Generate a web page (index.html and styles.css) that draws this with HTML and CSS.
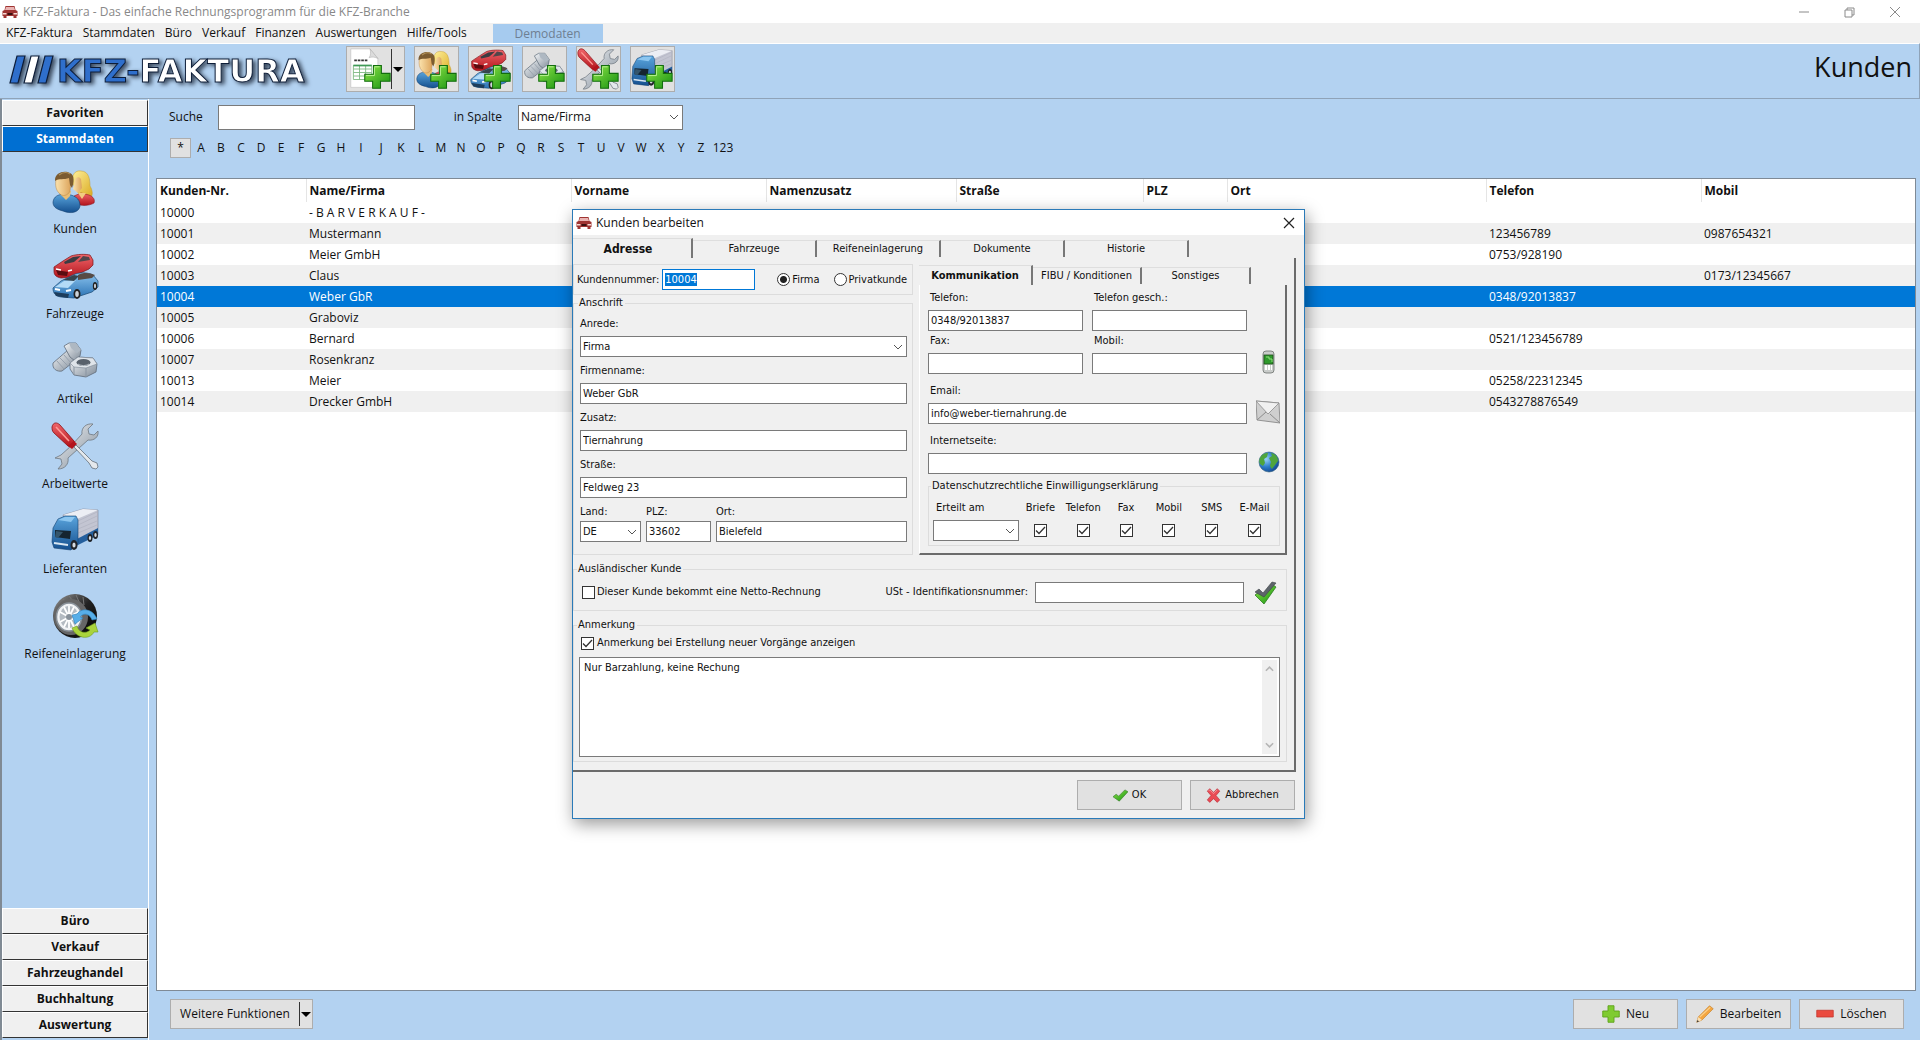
FILE: index.html
```html
<!DOCTYPE html>
<html lang="de">
<head>
    <meta charset="UTF-8">
    <meta name="viewport" content="width=device-width, initial-scale=1.0">
    <title>KFZ-Faktura</title>
    <link rel="stylesheet" href="styles.css">
</head>
<body>
    <!-- icon sprite -->
    <svg class="sprite" aria-hidden="true">
        <defs>
            <linearGradient id="gBlue" x1="0" y1="0" x2="0" y2="1"><stop offset="0" stop-color="#5aa5dd"/><stop offset="1" stop-color="#15508f"/></linearGradient>
            <linearGradient id="gCar" x1="0" y1="0" x2="0" y2="1"><stop offset="0" stop-color="#8cc4ee"/><stop offset="1" stop-color="#2a72b4"/></linearGradient>
            <linearGradient id="gRed" x1="0" y1="0" x2="0" y2="1"><stop offset="0" stop-color="#f0666a"/><stop offset="1" stop-color="#b3141c"/></linearGradient>
            <linearGradient id="gSkin" x1="0" y1="0" x2="1" y2="0"><stop offset="0" stop-color="#fbe3ae"/><stop offset="1" stop-color="#dca35a"/></linearGradient>
            <linearGradient id="gHair" x1="0" y1="0" x2="1" y2="1"><stop offset="0" stop-color="#fff09a"/><stop offset="1" stop-color="#d9a920"/></linearGradient>
            <linearGradient id="gSteel" x1="0" y1="0" x2="1" y2="1"><stop offset="0" stop-color="#f4f6f8"/><stop offset="1" stop-color="#7f8b98"/></linearGradient>
            <linearGradient id="gGreen" x1="0" y1="0" x2="1" y2="1"><stop offset="0" stop-color="#8fe548"/><stop offset="1" stop-color="#149010"/></linearGradient>
            <linearGradient id="gTyre" x1="0" y1="0" x2="1" y2="1"><stop offset="0" stop-color="#9a9a9a"/><stop offset="0.5" stop-color="#222"/><stop offset="1" stop-color="#000"/></linearGradient>
            <radialGradient id="gGlobe" cx="0.35" cy="0.35" r="0.8"><stop offset="0" stop-color="#9ad4f8"/><stop offset="0.5" stop-color="#2c7cc8"/><stop offset="1" stop-color="#0d3a80"/></radialGradient>
        </defs>
        <symbol id="i-kunden" viewBox="0 0 48 48">
            <path d="M22 17C20 8 24 3 30 4c8 0 9 9 9 15 3 5 3 10 0 12l-10-2z" fill="url(#gHair)" stroke="#c39a2c" stroke-width=".5"/>
            <path d="M24 13c1-3 4-4 6-1l1 9-4 5-5-4z" fill="url(#gSkin)"/>
            <path d="M23 29l7-3 8 2c5 2 6 5 5 8-5 3-13 3-17 1z" fill="url(#gRed)" stroke="#8d1a20" stroke-width=".6"/>
            <path d="M27 26l4 6 4-6z" fill="#f1cb80"/>
            <path d="M2 35c1-6 5-7 10-8l8 1c6 2 9 5 9 11-1 7-10 8-17 5C4 42 2 39 2 35z" fill="url(#gBlue)" stroke="#123f70" stroke-width=".6"/>
            <path d="M10 24h10l-1 5-4 4-5-5z" fill="#e9bd74"/>
            <path d="M5 13c1-7 15-7 15 1l-1 10c-2 5-8 6-11 2-3-3-4-8-3-13z" fill="url(#gSkin)" stroke="#b98443" stroke-width=".5"/>
            <path d="M4 13C4 5 14 3 19 6c5 2 4 10 2 15l-2-3-1-7C13 13 8 11 4 14z" fill="#7b5b31"/>
            <path d="M8 8c4-3 8-3 11-1" fill="none" stroke="#b2925a" stroke-width="1.2"/>
        </symbol>
        <symbol id="i-fahrzeuge" viewBox="0 0 48 48">
            <path d="M3 15l9-6 8-5c6-2 15-2 19-1l3 5v5l-4 4-17 8-11 1c-5-1-7-3-7-7z" fill="url(#gRed)" stroke="#7c1116" stroke-width=".7"/>
            <path d="M13 10l9-5 8-1-7 6-9 2z" fill="#3c3c42"/>
            <path d="M32 4l6 1 1 3-12 2z" fill="#52464a"/>
            <path d="M5 18l12 2-1 4-9-1z" fill="#5a0c10"/>
            <path d="M5 17l5 1M17 19l4-1" stroke="#fff" stroke-width="1.5"/>
            <path d="M2 36l8-7 12-6c6-3 14-3 20 0l5 6v6l-6 5-18 6-13-1c-6-1-8-4-8-9z" fill="url(#gCar)" stroke="#194872" stroke-width=".7"/>
            <path d="M4 35l9-6 12-1-8 8z" fill="#b4dbf7"/>
            <path d="M14 27l9-4 5 1-5 5-11-1z" fill="#36454f"/>
            <path d="M27 23c6-3 12-2 17 0l-3 3-14 2z" fill="#574b45"/>
            <path d="M3 40l15 2-1 4-12-2z" fill="#1d3d5c"/>
            <path d="M4 37l5 1M15 39l5-1" stroke="#fff" stroke-width="2"/>
            <ellipse cx="26" cy="42" rx="3.5" ry="5" fill="#222"/><ellipse cx="26" cy="42" rx="1.8" ry="3" fill="#ccd3da"/>
            <ellipse cx="44" cy="34" rx="2.2" ry="4" fill="#222"/><ellipse cx="44" cy="34" rx="1" ry="2.2" fill="#ccd3da"/>
        </symbol>
        <symbol id="i-artikel" viewBox="0 0 48 48">
            <path d="M2 26L17 13l8 10-14 11c-5 1-10-2-9-8z" fill="url(#gSteel)" stroke="#5f6b78" stroke-width=".8"/>
            <path d="M6 24l7 8M9 21l8 8M13 18l7 8" stroke="#97a1ad" stroke-width="1"/>
            <path d="M13 9l5-3 7 0 5 7-1 6-5 5-5-4z" fill="url(#gSteel)" stroke="#5f6b78" stroke-width=".8"/>
            <path d="M18 6l7 0 5 7-4 3-6-5z" fill="#aeb8c2"/>
            <path d="M19 26l8-6 15 1 4 6-1 8-10 5-12-2-4-6z" fill="url(#gSteel)" stroke="#5f6b78" stroke-width=".8"/>
            <path d="M19 26l8-6 15 1 4 6-11 4-12-1z" fill="#dfe4e9" stroke="#7b8794" stroke-width=".6"/>
            <path d="M23 30v8M35 31v9" stroke="#8a95a1" stroke-width="1"/>
            <ellipse cx="32.500" cy="25.500" rx="7" ry="3.500" fill="#59626c"/>
            <path d="M27 27c3 2 8 2 11 0" stroke="#b9c1c9" fill="none"/>
        </symbol>
        <symbol id="i-arbeitswerte" viewBox="0 0 48 48">
            <path d="M4 36l6-3 10-9 11-12c-1-6 4-11 11-10l-5 5 1 5 5 1 4-4c1 6-4 10-10 9L17 36c1 6-3 11-10 11l4-5-1-5-6-1z" fill="url(#gSteel)" stroke="#6f7780" stroke-width=".8"/>
            <path d="M1 5C2 0 6 0 9 3l14 16c2 3-2 7-6 5L3 11C1 9 1 7 1 5z" fill="url(#gRed)" stroke="#8c1014" stroke-width=".8"/>
            <path d="M5 5l13 14" stroke="#ff9a94" stroke-width="1.6"/>
            <path d="M17 24l6-5 3 3-5 5z" fill="#b3141c"/>
            <path d="M23 25l2-2 16 16 5 2 1 4-2 2-4-1-3-5z" fill="#e4e8ec" stroke="#66707a" stroke-width=".8"/>
        </symbol>
        <symbol id="i-lieferanten" viewBox="0 0 48 48">
            <path d="M12 8L32 2l15 1v25l-22 9z" fill="#c3c5d2" stroke="#7d8090" stroke-width=".6"/>
            <path d="M12 8L32 2l15 1-21 9z" fill="#eceef4"/>
            <path d="M27 14l19-9M27 18l19-9M27 22l19-8M27 26l19-8" stroke="#b3b5c3" stroke-width=".8"/>
            <path d="M24 33l23-12v7L25 39z" fill="#245f9d"/>
            <path d="M2 21l5-9 7-3h11l2 4v23l-7 7-17-2-2-6z" fill="url(#gBlue)" stroke="#123f70" stroke-width=".6"/>
            <path d="M4 23l16 1-1 8-15-2z" fill="#152430"/>
            <path d="M5 24l7 1-5 6-3-1z" fill="#35556b"/>
            <path d="M7 13l7-3h10l-4 5z" fill="#8cc6f0"/>
            <path d="M3 36l14 2" stroke="#d8e6f2" stroke-width="2"/>
            <ellipse cx="23" cy="38" rx="3.500" ry="5" fill="#20242a"/><ellipse cx="23" cy="38" rx="1.600" ry="2.600" fill="#d3d9df"/>
            <ellipse cx="39" cy="31" rx="2.500" ry="4" fill="#20242a"/><ellipse cx="39" cy="31" rx="1.200" ry="2" fill="#d3d9df"/>
            <ellipse cx="44.500" cy="28" rx="2.500" ry="4" fill="#20242a"/><ellipse cx="44.500" cy="28" rx="1.200" ry="2" fill="#d3d9df"/>
        </symbol>
        <symbol id="i-reifen" viewBox="0 0 48 48">
            <circle cx="24" cy="24" r="22" fill="url(#gTyre)"/>
            <path d="M12 7l9 8M18 4l7 9M25 3l4 9M32 5l1 8" stroke="#777" stroke-width="1"/>
            <ellipse cx="20" cy="25" rx="17" ry="18" fill="#666"/>
            <ellipse cx="18" cy="25" rx="12.500" ry="14" fill="#f1f3f5" stroke="#8a929a" stroke-width="1.500"/>
            <ellipse cx="18" cy="25" rx="9.500" ry="11" fill="#b4bbc2"/>
            <path d="M18 14v22M9 20l18 10M9 30l18-10M13 15l10 20M23 15L13 35" stroke="#fff" stroke-width="1.800"/>
            <circle cx="18" cy="25" r="3" fill="#88919a"/>
            <path d="M46 27C42 17 31 15 26 22l-5 1 3 9 8-6-3-1c4-5 10-3 12 3z" fill="#57aee8" stroke="#2f7fb9" stroke-width=".6"/>
            <path d="M21 36c4 10 17 13 22 4l4 0-3-9-9 5 4 2c-4 4-11 3-13-4z" fill="#a9d33c" stroke="#6d9a1c" stroke-width=".6"/>
        </symbol>
        <symbol id="i-rechnung" viewBox="0 0 48 48">
            <path d="M2 1h22l9 11v33H2z" fill="#fff" stroke="#c4c4c4" stroke-width=".8"/>
            <path d="M24 1l9 11c-4-2-7-2-10-1 2-3 2-6 1-10z" fill="#dcdcdc" stroke="#aaa" stroke-width=".6"/>
            <path d="M6 14h16" stroke="#333" stroke-width="2" stroke-dasharray="3 1"/>
            <path d="M5 20h21v16H5zM5 24h21M5 28h21M5 32h21M12 20v16M19 20v16" fill="none" stroke="#7ab77f" stroke-width="1"/>
            <path d="M5 20h21" stroke="#3f9a56" stroke-width="2"/>
        </symbol>
        <symbol id="i-badge" viewBox="0 0 48 48">
            <path d="M28 20h9v9h10v9H36v8h-9v-8H18v-8h10z" fill="url(#gGreen)" stroke="#126d0e" stroke-width="1.200"/>
            <path d="M29 21.500h6M19.500 31.500h9.500v-9.500" fill="none" stroke="#c5f7a0" stroke-width="1"/>
        </symbol>
        <symbol id="i-auto" viewBox="0 0 16 16">
            <path d="M3.500 2h9l1 4 2 1v5h-1v2h-3v-2h-7v2h-3v-2h-1V7l2-1z" fill="#9f3432"/>
            <path d="M4 3h8l1 3H3z" fill="#e9b4b3"/>
            <path d="M1 9h3.500v1.500H1zM11.500 9H15v1.500h-3.500z" fill="#f7d9d4"/>
            <path d="M5.500 9h5v2h-5z" fill="#3b1010"/>
        </symbol>
        <symbol id="i-handy" viewBox="0 0 24 24">
            <rect x="7" y="1" width="11" height="22" rx="3" fill="#c9ccca" stroke="#6b706c" stroke-width=".8"/>
            <rect x="8" y="5" width="9" height="9" fill="#2f9a2c" stroke="#1c4c1a" stroke-width=".8"/>
            <path d="M10 7h3v2h3v3" stroke="#8fe07c" fill="none"/>
            <path d="M9 15h2v5H9zM12 15h2v5h-2zM15 15h1v5h-1z" fill="#fff"/>
        </symbol>
        <symbol id="i-brief" viewBox="0 0 24 24">
            <path d="M0 1l23 2 1 20L1 20z" fill="#cfcfcf" stroke="#808080" stroke-width=".8"/>
            <path d="M1 20l9-8M24 23l-10-9" stroke="#8c8c8c" stroke-width="1"/>
            <path d="M0 1l12 13L23 3z" fill="#f0f0f0" stroke="#8c8c8c" stroke-width=".8"/>
        </symbol>
        <symbol id="i-globus" viewBox="0 0 24 24">
            <circle cx="13" cy="12" r="10" fill="url(#gGlobe)" stroke="#2c5c7d" stroke-width=".6"/>
            <path d="M4 8c2-4 5-5 8-5l-1 4-3 2 1 4-2 3-3-2c-1-2-1-4 0-6zM15 3c5 1 7 4 7 8l-3 4-3 4-2-3 1-4-2-4 3-2z" fill="#4fa53c"/>
        </symbol>
        <symbol id="i-haken" viewBox="0 0 24 24">
            <path d="M0 14l5-4 4 3L19 3l5 3L10 21z" fill="url(#gGreen)" stroke="#3c7d32" stroke-width="1"/>
        </symbol>
        <symbol id="i-haken-dunkel" viewBox="0 0 24 24">
            <path d="M1 15l4-3 4 4L19 5l3 2-12 17z" fill="url(#gGreen)" stroke="#2c7d22" stroke-width=".8"/>
            <path d="M1 12l4-3 4 4L18 2l4 1-12 14z" fill="#5d646a" stroke="#3c4247" stroke-width=".6"/>
        </symbol>
        <symbol id="i-kreuz" viewBox="0 0 24 24">
            <path d="M2 5l4-4 6 6 6-6 4 4-6 7 6 7-4 4-6-6-6 6-4-4 6-7z" fill="#ea4b55" stroke="#b32e38" stroke-width="1"/>
            <path d="M4 5l2-2 6 6 6-6" fill="none" stroke="#f7a3a8" stroke-width="1.200"/>
        </symbol>
        <symbol id="i-plus" viewBox="0 0 24 24">
            <path d="M8 1h8v7h7v8h-7v7H8v-7H1V8h7z" fill="#7fcb31" stroke="#5da31c" stroke-width="1.200"/>
        </symbol>
        <symbol id="i-stift" viewBox="0 0 24 24">
            <path d="M1 23l2-7L18 1l5 4L8 20z" fill="#f4a53f" stroke="#c07a22" stroke-width=".8"/>
            <path d="M1 23l2-7 5 4z" fill="#f7dfb5"/><path d="M1 23l1-3 2 2z" fill="#333"/>
            <path d="M5 16L19 3" stroke="#fbd08a" stroke-width="1.500"/>
        </symbol>
        <symbol id="i-minus" viewBox="0 0 24 24">
            <path d="M1 7h22v9H1z" fill="#ea4b3f" stroke="#c23128" stroke-width="1"/>
        </symbol>
    </svg>

    <header class="titlebar">
        <svg class="icon-16"><use href="#i-auto"/></svg>
        <span class="titlebar-text">KFZ-Faktura - Das einfache Rechnungsprogramm für die KFZ-Branche</span>
        <svg class="window-controls" viewBox="0 0 108 16" aria-hidden="true">
            <path d="M3 8h10M49 6h7v7h-7zM51 6V4h7v7h-2M94 3l10 10M104 3L94 13" fill="none" stroke="#8a8a8a"/>
        </svg>
    </header>

    <nav class="menubar">
        <button type="button">KFZ-Faktura</button>
        <button type="button">Stammdaten</button>
        <button type="button">Büro</button>
        <button type="button">Verkauf</button>
        <button type="button">Finanzen</button>
        <button type="button">Auswertungen</button>
        <button type="button">Hilfe/Tools</button>
        <span class="demo">Demodaten</span>
    </nav>

    <div class="toolbar">
        <svg class="logo" viewBox="0 0 330 50" role="img" aria-label="KFZ-Faktura">
            <g stroke="#0d1d38" stroke-width="1.200">
                <path d="M17 12h8l-7 27h-8z" fill="#2f6fcc"/>
                <path d="M31 12h8l-7 27h-8z" fill="#fff"/>
                <path d="M45 12h8l-7 27h-8z" fill="#2f6fcc"/>
            </g>
            <text class="logo-text" x="57" y="38"><tspan class="logo-blue">KFZ-</tspan><tspan class="logo-white">FAKTURA</tspan></text>
        </svg>
        <div class="tools">
            <div class="split-tool">
                <button type="button" class="split-main" aria-label="Neue Rechnung"><svg viewBox="0 0 48 48"><use href="#i-rechnung"/><use href="#i-badge"/></svg></button>
                <button type="button" class="split-arrow" aria-label="Auswahl"><i class="arrow"></i></button>
            </div>
            <button type="button" class="tool" aria-label="Neuer Kunde"><svg viewBox="0 0 48 48"><use href="#i-kunden"/><use href="#i-badge"/></svg></button>
            <button type="button" class="tool" aria-label="Neues Fahrzeug"><svg viewBox="0 0 48 48"><use href="#i-fahrzeuge"/><use href="#i-badge"/></svg></button>
            <button type="button" class="tool" aria-label="Neuer Artikel"><svg viewBox="0 0 48 48"><use href="#i-artikel"/><use href="#i-badge"/></svg></button>
            <button type="button" class="tool" aria-label="Neuer Arbeitswert"><svg viewBox="0 0 48 48"><use href="#i-arbeitswerte"/><use href="#i-badge"/></svg></button>
            <button type="button" class="tool" aria-label="Neuer Lieferant"><svg viewBox="0 0 48 48"><use href="#i-lieferanten"/><use href="#i-badge"/></svg></button>
        </div>
        <h1>Kunden</h1>
    </div>

    <div class="workspace">
        <aside class="sidebar">
            <button type="button" class="side-head">Favoriten</button>
            <button type="button" class="side-head active">Stammdaten</button>
            <div class="side-items">
                <button type="button" class="side-item"><svg><use href="#i-kunden"/></svg>Kunden</button>
                <button type="button" class="side-item"><svg><use href="#i-fahrzeuge"/></svg>Fahrzeuge</button>
                <button type="button" class="side-item"><svg><use href="#i-artikel"/></svg>Artikel</button>
                <button type="button" class="side-item"><svg><use href="#i-arbeitswerte"/></svg>Arbeitwerte</button>
                <button type="button" class="side-item"><svg><use href="#i-lieferanten"/></svg>Lieferanten</button>
                <button type="button" class="side-item"><svg><use href="#i-reifen"/></svg>Reifeneinlagerung</button>
            </div>
            <button type="button" class="side-head">Büro</button>
            <button type="button" class="side-head">Verkauf</button>
            <button type="button" class="side-head">Fahrzeughandel</button>
            <button type="button" class="side-head">Buchhaltung</button>
            <button type="button" class="side-head">Auswertung</button>
        </aside>

        <main class="content">
            <div class="search">
                <label for="suche">Suche</label>
                <input type="text" id="suche">
                <label for="spalte" class="spalte-label">in Spalte</label>
                <select id="spalte"><option>Name/Firma</option></select>
            </div>
            <div class="letters">
                <button type="button" class="current">*</button>
                <button type="button">A</button><button type="button">B</button><button type="button">C</button><button type="button">D</button><button type="button">E</button><button type="button">F</button><button type="button">G</button><button type="button">H</button><button type="button">I</button><button type="button">J</button><button type="button">K</button><button type="button">L</button><button type="button">M</button><button type="button">N</button><button type="button">O</button><button type="button">P</button><button type="button">Q</button><button type="button">R</button><button type="button">S</button><button type="button">T</button><button type="button">U</button><button type="button">V</button><button type="button">W</button><button type="button">X</button><button type="button">Y</button><button type="button">Z</button><button type="button">123</button>
            </div>

            <div class="grid-panel">
                <table class="grid">
                    <colgroup>
                        <col class="c-nr"><col class="c-name"><col class="c-vorname"><col class="c-zusatz"><col class="c-strasse"><col class="c-plz"><col class="c-ort"><col class="c-telefon"><col>
                    </colgroup>
                    <thead>
                        <tr><th>Kunden-Nr.</th><th>Name/Firma</th><th>Vorname</th><th>Namenzusatz</th><th>Straße</th><th>PLZ</th><th>Ort</th><th>Telefon</th><th>Mobil</th></tr>
                    </thead>
                    <tbody>
                        <tr><td>10000</td><td>- B A R V E R K A U F -</td><td></td><td></td><td></td><td></td><td></td><td></td><td></td></tr>
                        <tr><td>10001</td><td>Mustermann</td><td></td><td></td><td></td><td></td><td></td><td>123456789</td><td>0987654321</td></tr>
                        <tr><td>10002</td><td>Meier GmbH</td><td></td><td></td><td></td><td></td><td></td><td>0753/928190</td><td></td></tr>
                        <tr><td>10003</td><td>Claus</td><td></td><td></td><td></td><td></td><td></td><td></td><td>0173/12345667</td></tr>
                        <tr class="selected"><td>10004</td><td>Weber GbR</td><td></td><td></td><td></td><td></td><td></td><td>0348/92013837</td><td></td></tr>
                        <tr><td>10005</td><td>Graboviz</td><td></td><td></td><td></td><td></td><td></td><td></td><td></td></tr>
                        <tr><td>10006</td><td>Bernard</td><td></td><td></td><td></td><td></td><td></td><td>0521/123456789</td><td></td></tr>
                        <tr><td>10007</td><td>Rosenkranz</td><td></td><td></td><td></td><td></td><td></td><td></td><td></td></tr>
                        <tr><td>10013</td><td>Meier</td><td></td><td></td><td></td><td></td><td></td><td>05258/22312345</td><td></td></tr>
                        <tr><td>10014</td><td>Drecker GmbH</td><td></td><td></td><td></td><td></td><td></td><td>0543278876549</td><td></td></tr>
                    </tbody>
                </table>
            </div>

            <div class="actions">
                <div class="split-button">
                    <button type="button" class="split-label">Weitere Funktionen</button>
                    <button type="button" class="split-arrow" aria-label="Auswahl"><i class="arrow"></i></button>
                </div>
                <button type="button" class="btn first"><svg><use href="#i-plus"/></svg>Neu</button>
                <button type="button" class="btn"><svg><use href="#i-stift"/></svg>Bearbeiten</button>
                <button type="button" class="btn"><svg><use href="#i-minus"/></svg>Löschen</button>
            </div>
        </main>
    </div>

    <form class="dialog" role="dialog" aria-labelledby="dlgTitle" onsubmit="return false">
        <div class="dialog-title">
            <svg class="icon-16"><use href="#i-auto"/></svg>
            <span id="dlgTitle">Kunden bearbeiten</span>
            <button type="button" class="close" aria-label="Schließen"><svg viewBox="0 0 12 12"><path d="M1 1l10 10M11 1L1 11" stroke="#222" stroke-width="1.200"/></svg></button>
        </div>

        <div class="tabs main-tabs">
            <button type="button" class="tab active">Adresse</button>
            <button type="button" class="tab">Fahrzeuge</button>
            <button type="button" class="tab">Reifeneinlagerung</button>
            <button type="button" class="tab">Dokumente</button>
            <button type="button" class="tab">Historie</button>
        </div>

        <div class="page">
            <div class="columns">
                <div class="address">
                    <fieldset class="number-row">
                        <label for="kundennr">Kundennummer:</label>
                        <input type="text" id="kundennr" value="10004">
                        <input type="radio" name="art" id="artFirma" checked><label for="artFirma">Firma</label>
                        <input type="radio" name="art" id="artPrivat"><label for="artPrivat">Privatkunde</label>
                    </fieldset>

                    <fieldset class="anschrift">
                        <legend>Anschrift</legend>
                        <div class="field">
                            <label for="anrede">Anrede:</label>
                            <select id="anrede"><option>Firma</option></select>
                        </div>
                        <div class="field">
                            <label for="firmenname">Firmenname:</label>
                            <input type="text" id="firmenname" value="Weber GbR">
                        </div>
                        <div class="field">
                            <label for="zusatz">Zusatz:</label>
                            <input type="text" id="zusatz" value="Tiernahrung">
                        </div>
                        <div class="field">
                            <label for="strasse">Straße:</label>
                            <input type="text" id="strasse" value="Feldweg 23">
                        </div>
                        <div class="place">
                            <div class="field tight">
                                <label for="land">Land:</label>
                                <select id="land"><option>DE</option></select>
                            </div>
                            <div class="field tight">
                                <label for="plz">PLZ:</label>
                                <input type="text" id="plz" value="33602">
                            </div>
                            <div class="field tight">
                                <label for="ort">Ort:</label>
                                <input type="text" id="ort" value="Bielefeld">
                            </div>
                        </div>
                    </fieldset>
                </div>

                <div class="contact">
                    <div class="tabs sub-tabs">
                        <button type="button" class="tab active">Kommunikation</button>
                        <button type="button" class="tab">FIBU / Konditionen</button>
                        <button type="button" class="tab">Sonstiges</button>
                    </div>
                    <div class="contact-page">
                        <div class="contact-grid">
                            <div class="field">
                                <label for="telefon">Telefon:</label>
                                <input type="text" id="telefon" value="0348/92013837">
                            </div>
                            <div class="field">
                                <label for="telefonG">Telefon gesch.:</label>
                                <input type="text" id="telefonG">
                            </div>
                            <span></span>
                            <div class="field">
                                <label for="fax">Fax:</label>
                                <input type="text" id="fax">
                            </div>
                            <div class="field">
                                <label for="mobil">Mobil:</label>
                                <input type="text" id="mobil">
                            </div>
                            <svg class="icon-24"><use href="#i-handy"/></svg>
                            <div class="field wide">
                                <label for="email">Email:</label>
                                <input type="text" id="email" value="info@weber-tiernahrung.de">
                            </div>
                            <svg class="icon-24"><use href="#i-brief"/></svg>
                            <div class="field wide">
                                <label for="web">Internetseite:</label>
                                <input type="text" id="web">
                            </div>
                            <svg class="icon-24"><use href="#i-globus"/></svg>
                        </div>

                        <fieldset class="consent">
                            <legend>Datenschutzrechtliche Einwilligungserklärung</legend>
                            <div class="consent-grid">
                                <div class="consent-date">
                                    <label for="erteilt">Erteilt am</label>
                                    <select id="erteilt"><option></option></select>
                                </div>
                                <label>Briefe<input type="checkbox" checked></label>
                                <label>Telefon<input type="checkbox" checked></label>
                                <label>Fax<input type="checkbox" checked></label>
                                <label>Mobil<input type="checkbox" checked></label>
                                <label>SMS<input type="checkbox" checked></label>
                                <label>E-Mail<input type="checkbox" checked></label>
                            </div>
                        </fieldset>
                    </div>
                </div>
            </div>

            <fieldset class="foreign">
                <legend>Ausländischer Kunde</legend>
                <div class="foreign-row">
                    <input type="checkbox" id="netto"><label for="netto">Dieser Kunde bekommt eine Netto-Rechnung</label>
                    <label for="ust" class="ust-label">USt - Identifikationsnummer:</label>
                    <input type="text" id="ust">
                    <svg class="icon-24"><use href="#i-haken-dunkel"/></svg>
                </div>
            </fieldset>

            <fieldset class="note">
                <legend>Anmerkung</legend>
                <div class="note-check">
                    <input type="checkbox" id="anzeigen" checked><label for="anzeigen">Anmerkung bei Erstellung neuer Vorgänge anzeigen</label>
                </div>
                <div class="note-box">
                    <textarea aria-label="Anmerkung">Nur Barzahlung, keine Rechung</textarea>
                    <div class="scroll">
                        <svg viewBox="0 0 10 7"><path d="M1 6l4-4 4 4" fill="none" stroke="#b5b5b5" stroke-width="1.800"/></svg>
                        <svg viewBox="0 0 10 7"><path d="M1 1l4 4 4-4" fill="none" stroke="#b5b5b5" stroke-width="1.800"/></svg>
                    </div>
                </div>
            </fieldset>
        </div>

        <div class="dialog-buttons">
            <button type="submit" class="btn"><svg><use href="#i-haken"/></svg>OK</button>
            <button type="button" class="btn"><svg><use href="#i-kreuz"/></svg>Abbrechen</button>
        </div>
    </form>

    <script>
        window.onload = function () {
            const nr = document.getElementById('kundennr');
            nr.focus();
            nr.select();
        };
    </script>
</body>
</html>
```
FILE: styles.css
```css
* {
    box-sizing: border-box;
}

body {
    margin: 0;
    min-height: 100vh;
    display: flex;
    flex-direction: column;
    background-color: #b3d2f1;
    color: #111;
    font-family: "Open Sans", "Noto Sans", sans-serif;
    font-size: 12px;
    line-height: 16px;
}

button, input, select, textarea {
    font: inherit;
    color: inherit;
    margin: 0;
    border-radius: 0;
}

button {
    background: none;
    border: none;
    padding: 0;
    cursor: pointer;
}

.sprite {
    position: absolute;
    width: 0;
    height: 0;
}

.icon-16 {
    width: 16px;
    height: 16px;
}

.icon-24 {
    width: 24px;
    height: 24px;
}

.arrow {
    border: 5px solid transparent;
    border-top-color: #000;
    border-bottom-width: 0;
}

/* title and menu */
.titlebar {
    display: flex;
    align-items: center;
    height: 23px;
    padding-left: 2px;
    background-color: #fff;
    color: #888;
}

.titlebar-text {
    margin-left: 5px;
}

.window-controls {
    width: 108px;
    height: 16px;
    margin-left: auto;
    margin-right: 16px;
}

.menubar {
    display: flex;
    align-items: center;
    gap: 10px;
    height: 20px;
    padding-left: 6px;
    background-color: #f0f0f0;
}

.demo {
    width: 110px;
    margin-left: 16px;
    line-height: 19px;
    text-align: center;
    background-color: #a6cbef;
    color: #6e7f92;
}

/* toolbar */
.toolbar {
    display: flex;
    height: 56px;
    padding-right: 7px;
    border: 1px solid #8fa3b8;
    border-top-color: #fff;
    border-left: none;
}

.logo {
    width: 330px;
    height: 50px;
    margin-right: 16px;
    filter: drop-shadow(3px 2px 2px #3d4c60);
}

.logo-text {
    font-family: "DejaVu Sans", sans-serif;
    font-size: 32px;
    font-weight: bold;
    stroke: #0d1d38;
    stroke-width: 1px;
}

.logo-blue {
    fill: #2f6fcc;
}

.logo-white {
    fill: #fff;
}

.tools {
    display: flex;
    gap: 9px;
    padding-top: 2px;
}

.tool, .split-tool {
    height: 46px;
    background-color: #e1e1e1;
    border: 1px solid #adadad;
}

.tool {
    width: 45px;
}

.tool svg, .split-main svg {
    display: block;
    width: 42px;
    height: 42px;
}

.split-tool {
    display: flex;
    width: 59px;
}

.split-main {
    padding-left: 2px;
}

.split-arrow {
    display: flex;
    align-items: center;
    justify-content: center;
    width: 13px;
    margin: 2px 0;
    border-left: 1px solid #333;
}

.toolbar h1 {
    margin: 0 0 0 auto;
    font-size: 27px;
    font-weight: normal;
    line-height: 46px;
}

/* sidebar */
.workspace {
    flex: 1;
    display: flex;
}

.sidebar {
    display: flex;
    flex-direction: column;
    width: 149px;
    padding: 1px 0 2px;
    border-left: 2px solid #808a94;
    border-right: 1px solid #fff;
}

.side-head {
    height: 26px;
    background-color: #f0f0f0;
    border: 1px solid #333;
    border-top-color: #fff;
    border-left-color: #fff;
    font-weight: bold;
}

.side-head.active {
    background-color: #006fd2;
    color: #fff;
}

.side-items {
    flex: 1;
    display: flex;
    flex-direction: column;
    padding-top: 15px;
}

.side-item {
    display: flex;
    flex-direction: column;
    align-items: center;
    gap: 6px;
    height: 85px;
}

.side-item svg {
    width: 48px;
    height: 48px;
}

/* customer list */
.content {
    flex: 1;
    display: flex;
    flex-direction: column;
    padding: 5px 4px 11px 7px;
}

.search {
    display: flex;
    align-items: center;
    height: 26px;
    padding-left: 13px;
}

.search input {
    width: 197px;
    height: 25px;
    margin-left: 15px;
}

.spalte-label {
    margin-left: 39px;
}

.search select {
    width: 165px;
    height: 25px;
    margin-left: 16px;
}

input[type="text"], select {
    min-width: 0;
    padding: 0 2px;
    border: 1px solid #7a7a7a;
    background-color: #fff;
    outline: none;
}

select {
    appearance: none;
    background-image: url("data:image/svg+xml,%3Csvg xmlns='http://www.w3.org/2000/svg' viewBox='0 0 10 6'%3E%3Cpath d='M1 1l4 4 4-4' fill='none' stroke='%23555'/%3E%3C/svg%3E");
    background-repeat: no-repeat;
    background-position: right 3px center;
    background-size: 10px 6px;
}

.letters {
    display: flex;
    margin: 8px 0 20px 14px;
}

.letters button {
    width: 20px;
    height: 20px;
    line-height: 20px;
}

.letters .current {
    width: 21px;
    background-color: #e1e1e1;
    border: 1px solid #adadad;
    line-height: 18px;
}

.letters button:last-child {
    width: 24px;
}

.grid-panel {
    flex: 1;
    background-color: #fff;
    border: 1px solid #7f8a96;
}

.grid {
    width: 100%;
    table-layout: fixed;
    border-collapse: collapse;
}

.grid th, .grid td {
    height: 21px;
    padding: 0 3px;
    text-align: left;
    white-space: nowrap;
}

.grid th {
    height: 23px;
    border-left: 1px solid #e5e5e5;
}

.grid th:first-child {
    border-left: none;
}

.grid tbody tr:nth-child(even) {
    background-color: #f0f0f0;
}

.grid tbody tr.selected {
    background-color: #0078d7;
    color: #fff;
}

.c-nr { width: 149px; }
.c-name { width: 265px; }
.c-vorname { width: 195px; }
.c-zusatz { width: 190px; }
.c-strasse { width: 187px; }
.c-plz { width: 84px; }
.c-ort { width: 259px; }
.c-telefon { width: 215px; }

.actions {
    display: flex;
    gap: 8px;
    padding: 8px 12px 0 14px;
}

.split-button {
    display: flex;
    width: 143px;
    height: 30px;
    background-color: #e1e1e1;
    border: 1px solid #adadad;
}

.split-label {
    flex: 1;
}

.btn {
    display: flex;
    align-items: center;
    justify-content: center;
    gap: 6px;
    width: 105px;
    height: 30px;
    background-color: #e1e1e1;
    border: 1px solid #adadad;
}

.btn.first {
    margin-left: auto;
}

.btn svg {
    width: 18px;
    height: 18px;
}

/* customer dialog */
.dialog {
    position: absolute;
    left: 572px;
    top: 209px;
    width: 733px;
    background-color: #f0f0f0;
    border: 1px solid #2a7ab8;
    box-shadow: 2px 5px 16px rgba(0, 0, 0, 0.4);
    font-family: "DejaVu Sans Condensed", "DejaVu Sans", sans-serif;
    font-size: 11px;
}

.dialog-title {
    display: flex;
    align-items: center;
    gap: 4px;
    height: 25px;
    padding: 0 9px 0 3px;
    background-color: #fff;
    font-family: "Open Sans", "Noto Sans", sans-serif;
    font-size: 12px;
}

.close {
    display: flex;
    margin-left: auto;
}

.close svg {
    width: 12px;
    height: 12px;
}

.tabs {
    display: flex;
    align-items: center;
    height: 20px;
}

.tab {
    width: 124px;
    height: 17px;
    border-top: 1px solid #dedede;
    border-right: 2px solid #777;
}

.tab.active {
    height: 20px;
    font-weight: bold;
}

.main-tabs {
    margin-top: 3px;
}

.main-tabs .active {
    width: 120px;
    padding-right: 8px;
    font-size: 12px;
}

.page {
    margin-right: 8px;
    padding: 6px 7px 8px 0;
    border-right: 2px solid #6b6b6b;
    border-bottom: 2px solid #6b6b6b;
}

fieldset {
    min-width: 0;
    margin: 0;
    padding: 0;
    border: 1px solid #dcdcdc;
}

legend {
    margin-left: -2px;
    padding: 0 2px 0 1px;
}

.columns {
    display: flex;
    gap: 6px;
}

.address {
    width: 340px;
}

.number-row {
    display: flex;
    align-items: center;
    height: 31px;
    padding-left: 3px;
}

.dialog input[type="text"], .dialog select {
    height: 21px;
}

.number-row input[type="text"] {
    width: 93px;
    margin-left: 3px;
    margin-right: 22px;
}

.dialog input[type="text"]:focus {
    border-color: #0078d7;
}

::selection {
    background-color: #0078d7;
    color: #fff;
}

input[type="radio"], input[type="checkbox"] {
    appearance: none;
    flex: none;
    width: 13px;
    height: 13px;
    background-color: #fff;
    border: 1px solid #333;
}

input[type="radio"] {
    border-radius: 50%;
    margin-right: 2px;
}

input[type="radio"]:checked {
    background-image: radial-gradient(circle, #222 3px, transparent 4px);
}

.number-row label + input[type="radio"] {
    margin-left: 14px;
}

input[type="checkbox"]:checked {
    background-image: url("data:image/svg+xml,%3Csvg xmlns='http://www.w3.org/2000/svg' viewBox='0 0 11 11'%3E%3Cpath d='M1 5.500l3 3 6-6.500' fill='none' stroke='%23333' stroke-width='1.300'/%3E%3C/svg%3E");
}

.anschrift {
    height: 260px;
    padding: 5px 5px 0 6px;
}

.field {
    display: flex;
    flex-direction: column;
    gap: 4px;
}

.anschrift .field + .field {
    margin-top: 6px;
}

.place {
    display: grid;
    grid-template-columns: 61px 65px 1fr;
    gap: 5px;
    margin-top: 6px;
}

.anschrift .place .field + .field {
    margin-top: 0;
}

.field.tight {
    gap: 1px;
}

.contact {
    flex: 1;
    display: flex;
    flex-direction: column;
    padding-top: 1px;
}

.sub-tabs .tab {
    width: 109px;
}

.sub-tabs .active {
    width: 114px;
}

.contact-page {
    flex: 1;
    padding: 5px 5px 0 8px;
    border-left: 1px solid #fff;
    border-right: 2px solid #6b6b6b;
    border-bottom: 2px solid #6b6b6b;
}

.contact-grid {
    display: grid;
    grid-template-columns: 155px 155px 24px;
    column-gap: 9px;
    row-gap: 2px;
    align-items: end;
}

.contact-grid label {
    padding-left: 2px;
}

.wide {
    grid-column: span 2;
    margin-top: 7px;
}

.consent {
    margin-top: 4px;
    padding: 6px 3px 4px 4px;
}

.consent-grid {
    display: grid;
    grid-template-columns: 86px repeat(6, 1fr);
}

.consent-grid > label {
    display: flex;
    flex-direction: column;
    align-items: center;
    gap: 8px;
}

.consent-date {
    display: flex;
    flex-direction: column;
    gap: 4px;
}

.consent-date label {
    padding-left: 3px;
}

.foreign, .note {
    margin-top: 6px;
}

.foreign {
    padding-left: 5px;
}

.foreign-row {
    display: flex;
    align-items: center;
    gap: 2px;
    padding: 3px 8px 6px 3px;
}

.foreign-row .ust-label {
    margin-left: auto;
}

.foreign-row input[type="text"] {
    width: 209px;
    margin-left: 5px;
    margin-right: 8px;
}

.note {
    padding: 1px 6px 4px 5px;
}

.note-check {
    display: flex;
    align-items: center;
    gap: 3px;
    height: 18px;
    margin-bottom: 5px;
    padding-left: 2px;
}

.note-box {
    display: flex;
    height: 100px;
    background-color: #fff;
    border: 1px solid #7a7a7a;
}

.note-box textarea {
    flex: 1;
    padding: 2px 4px;
    border: none;
    outline: none;
    resize: none;
    background: none;
}

.scroll {
    display: flex;
    flex-direction: column;
    justify-content: space-between;
    align-items: center;
    width: 15px;
    margin: 2px;
    padding: 5px 0;
    background-color: #f0f0f0;
}

.scroll svg {
    width: 9px;
    height: 7px;
}

.dialog-buttons {
    display: flex;
    justify-content: flex-end;
    gap: 8px;
    padding: 8px 9px;
}

.dialog-buttons .btn {
    gap: 4px;
}

.dialog-buttons .btn svg {
    width: 15px;
    height: 15px;
}
```
